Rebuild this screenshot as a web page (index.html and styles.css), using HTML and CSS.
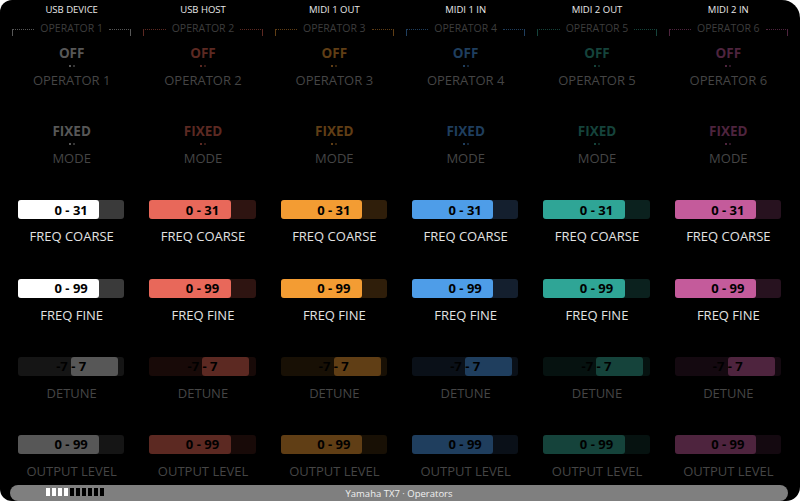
FILE: index.html
```html
<!DOCTYPE html>
<html lang="en">
<head>
  <meta charset="UTF-8">
  <meta name="viewport" content="width=device-width, initial-scale=1.0">
  <title>Yamaha TX7 - Operators</title>
  <link rel="stylesheet" href="styles.css">
</head>
<body>
  <div class="screen">
    <div class="operators">

      <!-- Operator 1 -->
      <section class="op c1">
        <div class="port">USB DEVICE</div>
        <div class="group"><span class="tick"></span><span class="group-name">OPERATOR 1</span><span class="tick right"></span></div>
        <div class="cell first">
          <div class="toggle-value">OFF</div>
          <div class="dots"><i></i><i></i></div>
          <div class="label dim">OPERATOR 1</div>
        </div>
        <div class="cell">
          <div class="toggle-value">FIXED</div>
          <div class="dots"><i></i><i></i></div>
          <div class="label dim">MODE</div>
        </div>
        <div class="cell">
          <div class="bar"><div class="fill" style="width: 76.5%"></div><span class="bar-text">0 - 31</span></div>
          <div class="label">FREQ COARSE</div>
        </div>
        <div class="cell">
          <div class="bar"><div class="fill" style="width: 76.5%"></div><span class="bar-text">0 - 99</span></div>
          <div class="label">FREQ FINE</div>
        </div>
        <div class="cell muted">
          <div class="bar"><div class="fill" style="left: 50%; width: 44%"></div><span class="bar-text">-7 - 7</span></div>
          <div class="label dim">DETUNE</div>
        </div>
        <div class="cell muted">
          <div class="bar"><div class="fill" style="width: 76.5%"></div><span class="bar-text">0 - 99</span></div>
          <div class="label dim">OUTPUT LEVEL</div>
        </div>
      </section>

      <!-- Operator 2 -->
      <section class="op c2">
        <div class="port">USB HOST</div>
        <div class="group"><span class="tick"></span><span class="group-name">OPERATOR 2</span><span class="tick right"></span></div>
        <div class="cell first">
          <div class="toggle-value">OFF</div>
          <div class="dots"><i></i><i></i></div>
          <div class="label dim">OPERATOR 2</div>
        </div>
        <div class="cell">
          <div class="toggle-value">FIXED</div>
          <div class="dots"><i></i><i></i></div>
          <div class="label dim">MODE</div>
        </div>
        <div class="cell">
          <div class="bar"><div class="fill" style="width: 76.5%"></div><span class="bar-text">0 - 31</span></div>
          <div class="label">FREQ COARSE</div>
        </div>
        <div class="cell">
          <div class="bar"><div class="fill" style="width: 76.5%"></div><span class="bar-text">0 - 99</span></div>
          <div class="label">FREQ FINE</div>
        </div>
        <div class="cell muted">
          <div class="bar"><div class="fill" style="left: 50%; width: 44%"></div><span class="bar-text">-7 - 7</span></div>
          <div class="label dim">DETUNE</div>
        </div>
        <div class="cell muted">
          <div class="bar"><div class="fill" style="width: 76.5%"></div><span class="bar-text">0 - 99</span></div>
          <div class="label dim">OUTPUT LEVEL</div>
        </div>
      </section>

      <!-- Operator 3 -->
      <section class="op c3">
        <div class="port">MIDI 1 OUT</div>
        <div class="group"><span class="tick"></span><span class="group-name">OPERATOR 3</span><span class="tick right"></span></div>
        <div class="cell first">
          <div class="toggle-value">OFF</div>
          <div class="dots"><i></i><i></i></div>
          <div class="label dim">OPERATOR 3</div>
        </div>
        <div class="cell">
          <div class="toggle-value">FIXED</div>
          <div class="dots"><i></i><i></i></div>
          <div class="label dim">MODE</div>
        </div>
        <div class="cell">
          <div class="bar"><div class="fill" style="width: 76.5%"></div><span class="bar-text">0 - 31</span></div>
          <div class="label">FREQ COARSE</div>
        </div>
        <div class="cell">
          <div class="bar"><div class="fill" style="width: 76.5%"></div><span class="bar-text">0 - 99</span></div>
          <div class="label">FREQ FINE</div>
        </div>
        <div class="cell muted">
          <div class="bar"><div class="fill" style="left: 50%; width: 44%"></div><span class="bar-text">-7 - 7</span></div>
          <div class="label dim">DETUNE</div>
        </div>
        <div class="cell muted">
          <div class="bar"><div class="fill" style="width: 76.5%"></div><span class="bar-text">0 - 99</span></div>
          <div class="label dim">OUTPUT LEVEL</div>
        </div>
      </section>

      <!-- Operator 4 -->
      <section class="op c4">
        <div class="port">MIDI 1 IN</div>
        <div class="group"><span class="tick"></span><span class="group-name">OPERATOR 4</span><span class="tick right"></span></div>
        <div class="cell first">
          <div class="toggle-value">OFF</div>
          <div class="dots"><i></i><i></i></div>
          <div class="label dim">OPERATOR 4</div>
        </div>
        <div class="cell">
          <div class="toggle-value">FIXED</div>
          <div class="dots"><i></i><i></i></div>
          <div class="label dim">MODE</div>
        </div>
        <div class="cell">
          <div class="bar"><div class="fill" style="width: 76.5%"></div><span class="bar-text">0 - 31</span></div>
          <div class="label">FREQ COARSE</div>
        </div>
        <div class="cell">
          <div class="bar"><div class="fill" style="width: 76.5%"></div><span class="bar-text">0 - 99</span></div>
          <div class="label">FREQ FINE</div>
        </div>
        <div class="cell muted">
          <div class="bar"><div class="fill" style="left: 50%; width: 44%"></div><span class="bar-text">-7 - 7</span></div>
          <div class="label dim">DETUNE</div>
        </div>
        <div class="cell muted">
          <div class="bar"><div class="fill" style="width: 76.5%"></div><span class="bar-text">0 - 99</span></div>
          <div class="label dim">OUTPUT LEVEL</div>
        </div>
      </section>

      <!-- Operator 5 -->
      <section class="op c5">
        <div class="port">MIDI 2 OUT</div>
        <div class="group"><span class="tick"></span><span class="group-name">OPERATOR 5</span><span class="tick right"></span></div>
        <div class="cell first">
          <div class="toggle-value">OFF</div>
          <div class="dots"><i></i><i></i></div>
          <div class="label dim">OPERATOR 5</div>
        </div>
        <div class="cell">
          <div class="toggle-value">FIXED</div>
          <div class="dots"><i></i><i></i></div>
          <div class="label dim">MODE</div>
        </div>
        <div class="cell">
          <div class="bar"><div class="fill" style="width: 76.5%"></div><span class="bar-text">0 - 31</span></div>
          <div class="label">FREQ COARSE</div>
        </div>
        <div class="cell">
          <div class="bar"><div class="fill" style="width: 76.5%"></div><span class="bar-text">0 - 99</span></div>
          <div class="label">FREQ FINE</div>
        </div>
        <div class="cell muted">
          <div class="bar"><div class="fill" style="left: 50%; width: 44%"></div><span class="bar-text">-7 - 7</span></div>
          <div class="label dim">DETUNE</div>
        </div>
        <div class="cell muted">
          <div class="bar"><div class="fill" style="width: 76.5%"></div><span class="bar-text">0 - 99</span></div>
          <div class="label dim">OUTPUT LEVEL</div>
        </div>
      </section>

      <!-- Operator 6 -->
      <section class="op c6">
        <div class="port">MIDI 2 IN</div>
        <div class="group"><span class="tick"></span><span class="group-name">OPERATOR 6</span><span class="tick right"></span></div>
        <div class="cell first">
          <div class="toggle-value">OFF</div>
          <div class="dots"><i></i><i></i></div>
          <div class="label dim">OPERATOR 6</div>
        </div>
        <div class="cell">
          <div class="toggle-value">FIXED</div>
          <div class="dots"><i></i><i></i></div>
          <div class="label dim">MODE</div>
        </div>
        <div class="cell">
          <div class="bar"><div class="fill" style="width: 76.5%"></div><span class="bar-text">0 - 31</span></div>
          <div class="label">FREQ COARSE</div>
        </div>
        <div class="cell">
          <div class="bar"><div class="fill" style="width: 76.5%"></div><span class="bar-text">0 - 99</span></div>
          <div class="label">FREQ FINE</div>
        </div>
        <div class="cell muted">
          <div class="bar"><div class="fill" style="left: 50%; width: 44%"></div><span class="bar-text">-7 - 7</span></div>
          <div class="label dim">DETUNE</div>
        </div>
        <div class="cell muted">
          <div class="bar"><div class="fill" style="width: 76.5%"></div><span class="bar-text">0 - 99</span></div>
          <div class="label dim">OUTPUT LEVEL</div>
        </div>
      </section>

    </div>

    <!-- Status bar -->
    <div class="status">
      <div class="meter">
        <i class="on"></i><i class="on"></i><i class="on"></i><i class="on"></i>
        <i></i><i></i><i></i><i></i><i></i><i></i>
      </div>
      <div class="status-title">Yamaha TX7 · Operators</div>
      <div></div>
    </div>
  </div>
</body>
</html>
```

FILE: styles.css
```css
body {
  margin: 0;
  background-color: #fff;
  font-family: "Open Sans", "Noto Sans", sans-serif;
}

.screen {
  width: 800px;
  height: 501px;
  background-color: #000;
  border-radius: 12px 18px 14px 12px;
  display: flex;
  flex-direction: column;
  overflow: hidden;
}

.operators {
  flex: 1;
  padding: 0 6px;
  display: grid;
  grid-template-columns: repeat(6, 1fr);
}

/* colour set per operator */
.c1 { --c: #ffffff; --dim: #575757; --track: #3a3a3a; --deep: #151515; }
.c2 { --c: #e8685a; --dim: #5c2922; --track: #2e1411; --deep: #180a08; }
.c3 { --c: #f39c33; --dim: #603e15; --track: #2f1e0a; --deep: #181005; }
.c4 { --c: #4e9de8; --dim: #1f3e5e; --track: #141f2e; --deep: #0a1018; }
.c5 { --c: #2fa596; --dim: #15433b; --track: #0b211e; --deep: #061210; }
.c6 { --c: #c45b9b; --dim: #4e243e; --track: #27121f; --deep: #140910; }

.op {
  display: flex;
  flex-direction: column;
}

.port {
  height: 20px;
  line-height: 20px;
  text-align: center;
  font-size: 9.5px;
  color: #e8e8e8;
}

.group {
  height: 16px;
  margin: 0 6px;
  display: flex;
  gap: 6px;
}

.group .tick {
  flex: 1;
  height: 7px;
  margin-top: 9px;
  border-top: 1px dotted var(--dim);
  border-left: 1px solid var(--dim);
  box-sizing: border-box;
}

.group .tick.right {
  border-left: none;
  border-right: 1px solid var(--dim);
}

.group-name {
  line-height: 16px;
  font-size: 10.5px;
  color: #3d3d3d;
}

.cell {
  height: 78.2px;
  display: flex;
  flex-direction: column;
  justify-content: flex-end;
  align-items: center;
}

.cell.first {
  height: 52px;
}

.toggle-value {
  line-height: 16px;
  font-size: 13.5px;
  font-weight: 700;
  color: var(--dim);
}

.dots {
  display: flex;
  gap: 2px;
  margin-top: 4px;
}

.dots i {
  width: 2px;
  height: 2px;
  background-color: var(--dim);
}

.dots i + i {
  opacity: 0.6;
}

.label {
  line-height: 16px;
  font-size: 13px;
  color: #e2e2e2;
  margin-top: 5px;
}

.label.dim {
  color: #454545;
}

.bar {
  position: relative;
  align-self: stretch;
  height: 19px;
  margin: 0 13px 9px 12px;
  border-radius: 3px;
  background-color: var(--track);
  display: flex;
  align-items: center;
  justify-content: center;
}

.bar + .label {
  margin-top: 0;
}

.fill {
  position: absolute;
  top: 0;
  bottom: 0;
  left: 0;
  border-radius: 3px;
  background-color: var(--c);
}

.bar-text {
  position: relative;
  font-size: 13px;
  font-weight: 700;
  color: #000;
}

.muted .bar {
  background-color: var(--deep);
}

.muted .fill {
  background-color: var(--dim);
}

.status {
  height: 16px;
  margin: 0 12px 0 10px;
  border-radius: 8px;
  background-color: #7f7f7f;
  display: grid;
  grid-template-columns: 1fr auto 1fr;
}

.meter {
  display: flex;
  gap: 2px;
  padding: 3px 0 0 36px;
}

.meter i {
  width: 4px;
  height: 8px;
  background-color: #000;
}

.meter i.on {
  background-color: #fff;
}

.status-title {
  line-height: 17px;
  font-size: 9.5px;
  color: #f0f0f0;
}
```
